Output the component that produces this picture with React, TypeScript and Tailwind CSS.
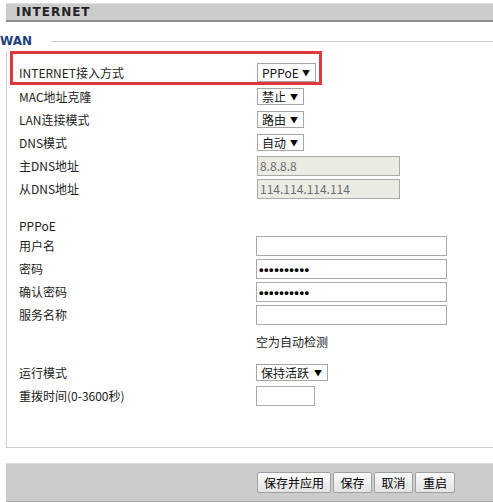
import React from "react";

const F = { fontFamily: '"Noto Sans CJK SC", "Liberation Sans", sans-serif' };

function Sel({ text, w }: { text: string; w: string }) {
  return (
    <div
      className={`${w} h-[17px] border border-[#a6a6a6] bg-white flex items-center justify-between pl-[4px] pr-[5px] text-[12px] leading-none text-[#111]`}
    >
      <span>{text}</span>
      <span className="text-[8px] text-black">▼</span>
    </div>
  );
}

function Input({ w, value, disabled, pw }: { w: string; value?: string; disabled?: boolean; pw?: boolean }) {
  return (
    <div
      className={`${w} h-[20px] border border-[#a9a9a9] flex items-center pl-[2px] text-[12px] ${
        disabled ? "bg-[#ebebe4] text-[#6d6d6d]" : "bg-white text-black"
      }`}
    >
      {pw ? (
        <span className="text-[13px] font-bold tracking-[0.5px] leading-none" style={{ fontFamily: '"Liberation Sans", sans-serif' }}>
          ••••••••••
        </span>
      ) : (
        <span>{value}</span>
      )}
    </div>
  );
}

function Row({ label, children, h = "h-[23px]", align = "items-center" }: { label: string; children?: React.ReactNode; h?: string; align?: string }) {
  return (
    <div className={`flex ${align} ${h} pl-[12px]`}>
      <div className="w-[237px] leading-[20px] text-[12px] text-[#222]">{label}</div>
      <div>{children}</div>
    </div>
  );
}

function Btn({ text, w }: { text: string; w: string }) {
  return (
    <div className={`${w} h-[21px] border border-[#a0a0a0] bg-gradient-to-b from-[#fafafa] to-[#e3e3e3] flex items-center justify-center text-[12px] text-black rounded-[2px]`}>
      {text}
    </div>
  );
}

export default function App() {
  return (
    <div className="w-[493px] h-[502px] bg-white overflow-hidden" style={F}>
      <div className="ml-[6px] mt-[3px] h-[19px] bg-[#cccccc] border-t border-[#dedede] border-b-2 border-b-[#8f8f8f] flex items-center pl-[10px]">
        <span
          className="text-[12px] font-bold tracking-[1px] text-[#222]"
          style={{ fontFamily: '"DejaVu Sans", Verdana, sans-serif' }}
        >
          INTERNET
        </span>
      </div>
      <div className="flex items-center h-[26px] pt-[12px]">
        <span
          className="text-[12px] font-bold text-[#1d3f7c] leading-[14px]"
          style={{ fontFamily: '"DejaVu Sans", Verdana, sans-serif' }}
        >
          WAN
        </span>
        <div className="flex-1 ml-[19px] h-px bg-[#cfcfcf]" />
      </div>
      <div className="ml-[6px] h-[397px] border-l border-b border-[#cfcfcf]">
        <div className="ml-[3px] mt-[3px] w-[312px] h-[34px] border-[3px] border-[#e0393c] flex items-end pl-[6px]">
          <div className="w-[238px] leading-[19px] text-[12px] text-[#222]">INTERNET接入方式</div>
          <div className="w-[59px] h-[19px] border border-[#a6a6a6] bg-white flex items-center justify-between pl-[4px] pr-[5px] text-[12px] leading-none text-[#111]">
            <span>PPPoE</span>
            <span className="text-[8px]">▼</span>
          </div>
        </div>
        <Row label="MAC地址克隆">
          <div className="ml-px"><Sel text="禁止" w="w-[47px]" /></div>
        </Row>
        <Row label="LAN连接模式">
          <div className="ml-px"><Sel text="路由" w="w-[47px]" /></div>
        </Row>
        <Row label="DNS模式">
          <div className="ml-px"><Sel text="自动" w="w-[47px]" /></div>
        </Row>
        <Row label="主DNS地址">
          <div className="ml-px"><Input w="w-[143px]" value="8.8.8.8" disabled /></div>
        </Row>
        <Row label="从DNS地址">
          <div className="ml-px"><Input w="w-[143px]" value="114.114.114.114" disabled /></div>
        </Row>
        <div className="mt-[16px]">
          <Row label="PPPoE" h="h-[20px]" align="items-start" />
        </div>
        <Row label="用户名" align="items-start">
          <Input w="w-[191px]" />
        </Row>
        <Row label="密码" align="items-start">
          <Input w="w-[191px]" pw />
        </Row>
        <Row label="确认密码" align="items-start">
          <Input w="w-[191px]" pw />
        </Row>
        <Row label="服务名称" align="items-start">
          <Input w="w-[191px]" />
        </Row>
        <Row label="" h="h-[20px]" align="items-start">
          <span className="text-[12px] leading-[20px] text-[#222]">空为自动检测</span>
        </Row>
        <div className="mt-[13px]">
          <Row label="运行模式">
            <Sel text="保持活跃" w="w-[72px]" />
          </Row>
        </div>
        <Row label="重拨时间(0-3600秒)">
          <Input w="w-[59px]" />
        </Row>
      </div>
      <div className="ml-[6px] mt-[15px] h-[40px] bg-[#cccccc] border-t border-[#dcdcdc] border-b-2 border-b-[#a8a8a8] flex items-center justify-end pr-[38px] gap-[2px]">
        <Btn text="保存并应用" w="w-[74px]" />
        <Btn text="保存" w="w-[39px]" />
        <Btn text="取消" w="w-[39px]" />
        <Btn text="重启" w="w-[40px]" />
      </div>
    </div>
  );
}
